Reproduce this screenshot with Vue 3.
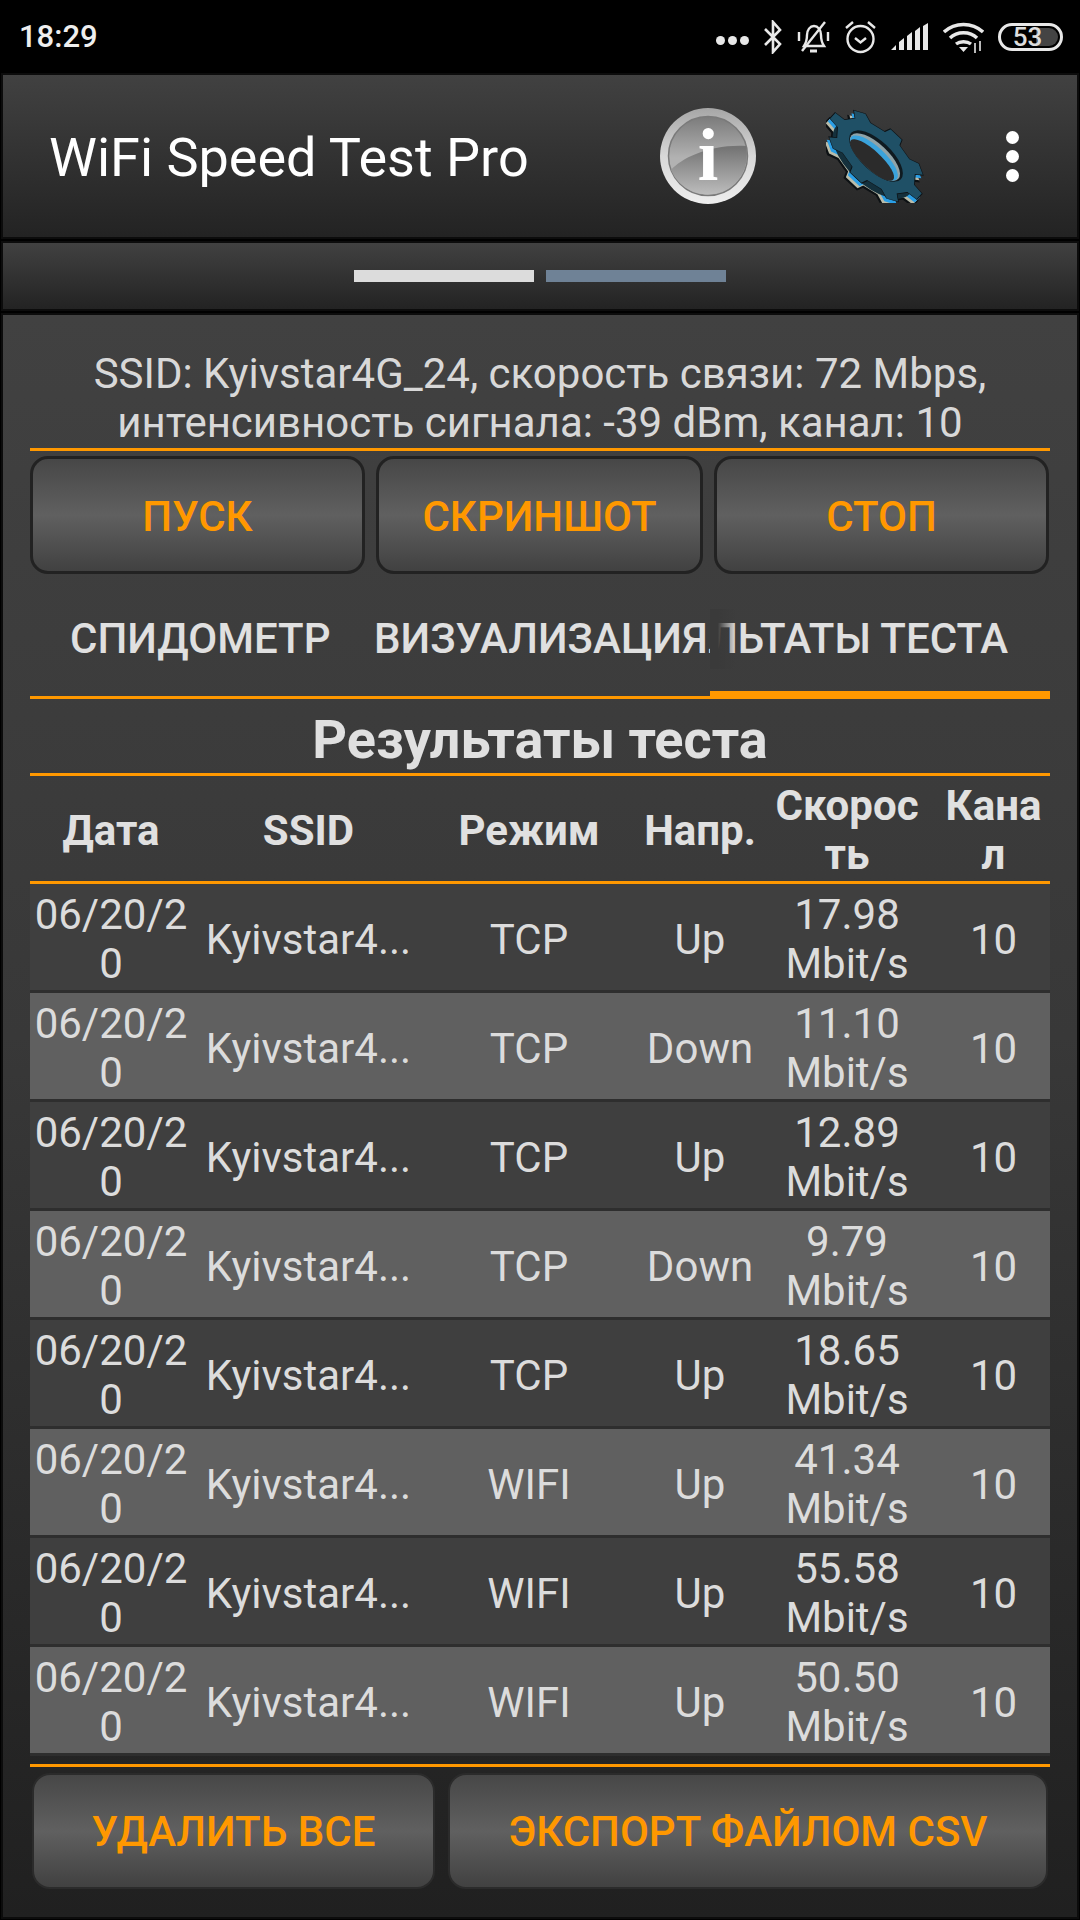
<template>
  <div class="screen">
    <!-- статус-бар -->
    <div class="statusbar">
      <span class="clock">18:29</span>
      <div class="status-icons">
        <span class="dots"><i></i><i></i><i></i></span>
        <svg class="ic" width="20" height="34" viewBox="0 0 20 34" fill="none" stroke="#e8e8e8" stroke-width="2.6"><path d="M2 9l15 15-7 8V2l7 8L2 25" /></svg>
        <svg class="ic" width="33" height="34" viewBox="0 0 33 34" fill="none" stroke="#e8e8e8" stroke-width="2.4"><path d="M7 26c2-3 3-6 3-11 0-5 3-9 7-9s7 4 7 9c0 5 1 8 3 11z" /><path d="M13 31h7" stroke-width="3" /><path d="M28 2L5 31" /><path d="M2 12v9M31 12v9" /></svg>
        <svg class="ic" width="33" height="34" viewBox="0 0 33 34" fill="none" stroke="#e8e8e8" stroke-width="2.4"><circle cx="16.5" cy="19" r="13" /><path d="M11 18l5.500 4.500L22 18" /><path d="M2 8l7-6M31 8l-7-6" /></svg>
        <svg class="ic" width="38" height="28" viewBox="0 0 38 28"><path fill="#e8e8e8" d="M0 27l5-5v5zM8 27v-8l5-4v12zM16 27V13l5-4v18zM24 27V8l5-4v23zM32 27V3l5-3v27z" /></svg>
        <svg class="ic" width="41" height="32" viewBox="0 0 41 32" fill="none" stroke="#e8e8e8" stroke-width="3.4"><path d="M1 11c11-10 28-10 39 0" /><path d="M7 17c7-7 20-7 27 0" /><path d="M13 23c4-3 11-3 15 0" /><path fill="#e8e8e8" stroke="none" d="M16 26h9l-4.500 5z" /><path stroke-width="1.6" d="M32 22v10M37 20v10" /></svg>
        <div class="battery"><span class="level"></span><b>53</b></div>
      </div>
    </div>

    <!-- шапка -->
    <header class="appbar panel">
      <h1>WiFi Speed Test Pro</h1>
      <svg class="info-icon" width="96" height="96" viewBox="0 0 96 96">
        <defs>
          <linearGradient id="ring" x1="0" y1="0" x2="0" y2="1"><stop offset="0" stop-color="#a6a6a6" /><stop offset=".5" stop-color="#d8d8d8" /><stop offset="1" stop-color="#eeeeee" /></linearGradient>
          <linearGradient id="disc" gradientUnits="userSpaceOnUse" x1="0" y1="10" x2="0" y2="50"><stop offset="0" stop-color="#7d7d7d" /><stop offset="1" stop-color="#b2b2b2" /></linearGradient>
          <linearGradient id="gloss" gradientUnits="userSpaceOnUse" x1="0" y1="40" x2="0" y2="87"><stop offset="0" stop-color="#757575" /><stop offset="1" stop-color="#bdbdbd" /></linearGradient>
        </defs>
        <circle cx="48" cy="48" r="48" fill="url(#ring)" />
        <circle cx="48" cy="48" r="39.500" fill="url(#disc)" stroke="#7a7a7a" stroke-width="1.500" />
        <path d="M11 62C22 50 50 36 86 38A39.500 39.500 0 0 1 11 62Z" fill="url(#gloss)" />
        <text class="info-i" x="48" y="72" text-anchor="middle">i</text>
      </svg>
      <svg class="gear" width="100" height="94" viewBox="0 0 100 94">
        <g transform="translate(50 47)">
          <path :d="gearPath" transform="translate(-5 6) rotate(43) scale(1 .5)" fill="#0d1114" stroke="#0d1114" stroke-width="3" />
          <path :d="gearPath" transform="translate(-4 5) rotate(43) scale(1 .5)" fill="#b9bcaa" />
          <path :d="gearPath" transform="translate(-2 3) rotate(43) scale(1 .5)" fill="#2a9fe6" />
          <ellipse rx="50" ry="25" transform="translate(-3 4) rotate(43)" fill="#14303c" />
          <path :d="gearPath" transform="rotate(43) scale(1 .5)" fill="#1f5066" stroke="#0d1114" stroke-width="1" />
          <ellipse rx="34" ry="15" transform="rotate(43)" fill="#0f1a20" />
          <ellipse rx="32" ry="13" transform="translate(-1 1) rotate(43)" fill="#8fa3a8" />
          <ellipse rx="31" ry="11" transform="translate(-2 2) rotate(43)" fill="#3aa3dc" />
          <ellipse rx="29" ry="9" transform="translate(-4 4) rotate(43)" fill="#2b2b2b" />
        </g>
      </svg>
      <div class="overflow"><i></i><i></i><i></i></div>
    </header>

    <!-- индикатор страниц -->
    <div class="pager panel">
      <span class="page on"></span>
      <span class="page"></span>
    </div>

    <main class="content">
      <p class="wifi-info">SSID: Kyivstar4G_24, скорость связи: 72 Mbps,<br />интенсивность сигнала: -39 dBm, канал: 10</p>

      <div class="actions">
        <button class="btn start">ПУСК</button>
        <button class="btn shot">СКРИНШОТ</button>
        <button class="btn stop">СТОП</button>
      </div>

      <nav class="tabs">
        <span class="tab t1">СПИДОМЕТР</span>
        <span class="tab t2">ВИЗУАЛИЗАЦИЯ</span>
        <span class="tab t3">ЛЬТАТЫ ТЕСТА</span>
        <span class="tab-fade"></span>
        <span class="tab-marker"></span>
      </nav>

      <h2 class="title">Результаты теста</h2>

      <div class="row head">
        <span>Дата</span>
        <span>SSID</span>
        <span>Режим</span>
        <span>Напр.</span>
        <span>Скорос<br />ть</span>
        <span class="last">Кана<br />л</span>
      </div>

      <div class="rows">
        <div v-for="(r, i) in results" :key="i" class="row" :class="{ alt: i % 2 === 1 }">
          <span>06/20/2<br />0</span>
          <span>Kyivstar4...</span>
          <span>{{ r.mode }}</span>
          <span>{{ r.dir }}</span>
          <span>{{ r.speed }}<br />Mbit/s</span>
          <span class="last">10</span>
        </div>
      </div>

      <div class="bottom-line"></div>
      <div class="bottom-actions">
        <button class="btn del">УДАЛИТЬ ВСЕ</button>
        <button class="btn csv">ЭКСПОРТ ФАЙЛОМ CSV</button>
      </div>
    </main>
  </div>
</template>

<script setup>
// контур шестерни: 8 зубьев, внешний радиус 60, впадины 50
function buildGear(n, outer, root) {
  const pts = []
  for (let i = 0; i < n; i++) {
    const a = (i / n) * Math.PI * 2
    const step = (Math.PI * 2) / n
    for (const [off, r] of [[-0.27, root], [-0.17, outer], [0.17, outer], [0.27, root]]) {
      const t = a + off * step
      pts.push(`${(Math.cos(t) * r).toFixed(1)} ${(Math.sin(t) * r).toFixed(1)}`)
    }
  }
  return 'M' + pts.join('L') + 'Z'
}
const gearPath = buildGear(8, 60, 49)

const results = [
  { mode: 'TCP', dir: 'Up', speed: '17.98' },
  { mode: 'TCP', dir: 'Down', speed: '11.10' },
  { mode: 'TCP', dir: 'Up', speed: '12.89' },
  { mode: 'TCP', dir: 'Down', speed: '9.79' },
  { mode: 'TCP', dir: 'Up', speed: '18.65' },
  { mode: 'WIFI', dir: 'Up', speed: '41.34' },
  { mode: 'WIFI', dir: 'Up', speed: '55.58' },
  { mode: 'WIFI', dir: 'Up', speed: '50.50' },
]
</script>

<style>
html, body { margin: 0; background: #000; }
</style>

<style scoped>
.screen {
  width: 1080px;
  height: 1920px;
  overflow: hidden;
  background: #000;
  color: #e0e0e0;
  font-family: Roboto, "Liberation Sans", sans-serif;
  display: flex;
  flex-direction: column;
}

/* статус-бар */
.statusbar {
  height: 73px;
  flex: none;
  display: flex;
  align-items: center;
  justify-content: space-between;
  padding: 0 17px 0 19px;
}
.clock { font-size: 31px; font-weight: 500; color: #eee; }
.status-icons { display: flex; align-items: center; gap: 14px; }
.ic { display: block; }
.dots { display: flex; gap: 3px; align-self: flex-end; padding-bottom: 9px; }
.dots i { width: 9px; height: 9px; border-radius: 50%; background: #e8e8e8; }
.battery {
  position: relative;
  box-sizing: border-box;
  width: 65px;
  height: 28px;
  border: 3px solid #e8e8e8;
  border-radius: 14px;
  text-align: center;
  overflow: hidden;
}
.battery b { position: relative; font-size: 26px; font-weight: 500; line-height: 22px; display: block; padding-right: 6px; color: #ddd; }
.level { position: absolute; right: 2px; top: 2px; bottom: 2px; width: 22px; background: #444; border-radius: 0 9px 9px 0; }

.panel {
  flex: none;
  margin: 0 3px;
  background: linear-gradient(#414141, #232323);
  box-shadow: 0 0 0 2px #0c0c0c;
}

/* шапка */
.appbar {
  height: 162px;
  margin-top: 2px;
  display: flex;
  align-items: center;
  padding: 0 0 0 46px;
}
.appbar h1 { margin: 0; flex: 1; font-size: 54px; font-weight: 400; color: #fff; padding-top: 2px; }
.info-icon { flex: none; margin-right: 70px; }
.info-i { font: bold 74px "Liberation Serif", serif; fill: #fff; }
.gear { flex: none; margin-right: 80px; }
.overflow { display: flex; flex-direction: column; gap: 6px; margin-right: 58px; }
.overflow i { width: 13px; height: 13px; border-radius: 50%; background: #fff; }

.pager {
  height: 66px;
  margin-top: 6px;
  display: flex;
  align-items: center;
  justify-content: center;
  gap: 12px;
}
.page { width: 180px; height: 12px; background: #6f8296; }
.page.on { background: #dcdcdc; }

/* основная часть */
.content {
  flex: 1;
  margin: 6px 3px 3px;
  padding: 34px 27px 0;
  background: linear-gradient(#414141 0, #383838 45%, #202020 100%);
  box-shadow: 0 0 0 2px #0c0c0c;
  min-height: 0;
  display: flex;
  flex-direction: column;
}
.wifi-info {
  margin: 0;
  height: 99px;
  flex: none;
  text-align: center;
  font-size: 42px;
  line-height: 49px;
  white-space: nowrap;
  color: #d8d8d8;
  border-bottom: 3px solid #ff9800;
}
.actions { display: flex; gap: 11px; margin-top: 5px; }
.btn {
  border: 3px solid #222;
  border-radius: 18px;
  background: linear-gradient(#474747, #606060 50%, #414141);
  color: #ff9800;
  font-family: inherit;
  font-weight: 500;
  font-size: 42px;
  padding: 0;
}
.actions .btn { height: 118px; padding-top: 2px; }
.start { width: 335px; }
.shot { width: 327px; }
.stop { width: 335px; }

.tabs {
  position: relative;
  flex: none;
  height: 122px;
  border-bottom: 3px solid #ff9800;
  font-size: 42px;
  line-height: 50px;
  font-weight: 500;
  color: #e0e0e0;
}
.tab { position: absolute; top: 40px; white-space: nowrap; }
.t1 { left: 40px; }
.t2 { left: 344px; }
.t3 { right: 42px; }
.tab-fade {
  position: absolute;
  left: 680px;
  top: 35px;
  width: 26px;
  height: 60px;
  background: linear-gradient(90deg, #3a3a3a 30%, rgba(58, 58, 58, 0));
}
.tab-marker { position: absolute; right: 0; bottom: -3px; width: 340px; height: 8px; background: #ff9800; }

.title {
  margin: 0;
  flex: none;
  height: 70px;
  padding-top: 4px;
  text-align: center;
  font-size: 54px;
  font-weight: 700;
  line-height: 74px;
  border-bottom: 3px solid #ff9800;
  color: #e0e0e0;
}

.row {
  display: grid;
  flex: none;
  grid-template-columns: 162px 233px 208px 134px 160px 123px;
  align-items: center;
  text-align: center;
  font-size: 42px;
  line-height: 49px;
  white-space: nowrap;
  color: #dcdcdc;
}
.last { padding-left: 10px; }
.row.head {
  height: 102px;
  padding-top: 3px;
  font-weight: 700;
  border-bottom: 3px solid #ff9800;
  color: #e0e0e0;
}
.rows {
  display: flex;
  flex: none;
  flex-direction: column;
  gap: 3px;
  padding-bottom: 3px;
  background: #2e2e2e;
}
.rows .row { height: 102px; padding-top: 4px; background: #3f3f3f; }
.rows .row.alt { background: #606060; }

.bottom-line { height: 3px; background: #ff9800; margin-top: 8px; flex: none; }
.bottom-actions { display: flex; gap: 13px; margin-top: 6px; padding: 0 2px; }
.bottom-actions .btn { height: 116px; border-color: #2b2b2b; border-width: 2px; }
.del { width: 403px; flex: none; }
.csv { flex: 1; }
</style>
